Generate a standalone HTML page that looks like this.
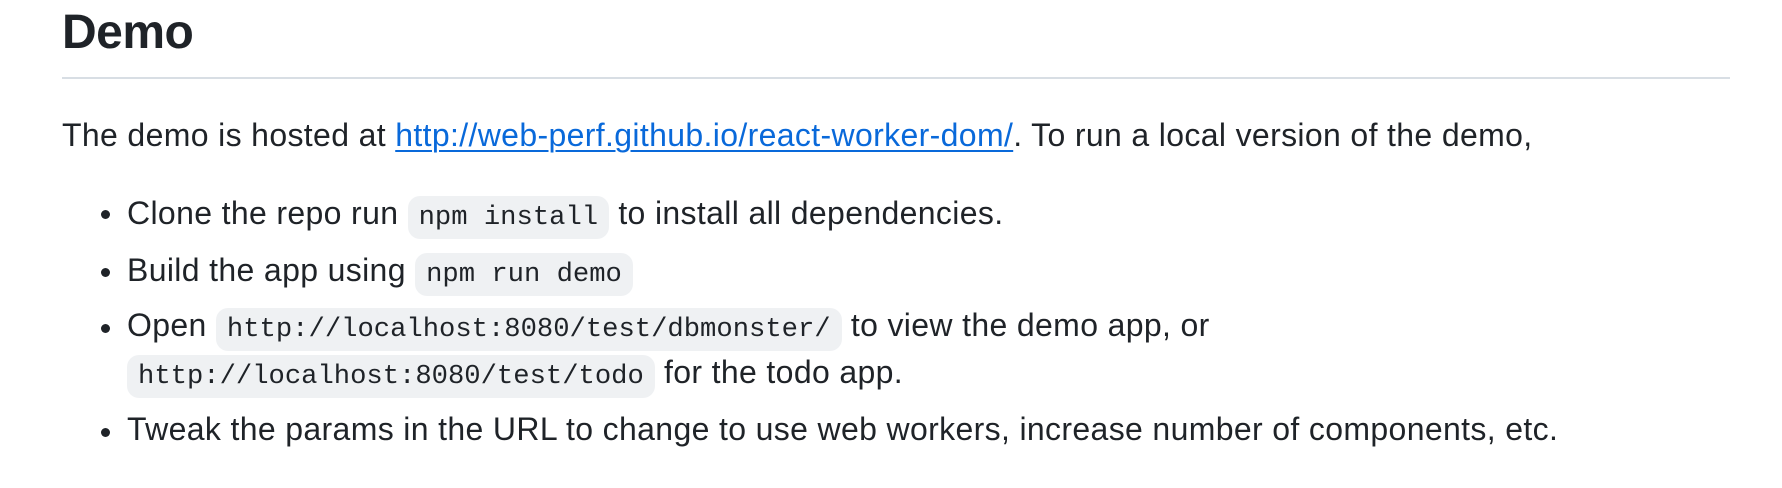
<!DOCTYPE html>
<html><head><meta charset="utf-8"><style>
html,body{margin:0;padding:0;background:#fff;width:1782px;height:488px;overflow:hidden}
body{font-family:"Liberation Sans",Helvetica,Arial,sans-serif;color:#1f2328;position:relative}
.l{position:absolute;white-space:nowrap;font-size:32px;line-height:48px;letter-spacing:0.35px}
h2{position:absolute;left:62px;top:3px;margin:0;font-size:48px;line-height:60px;font-weight:600;letter-spacing:-0.5px}
.rule{position:absolute;left:62px;top:77px;width:1668px;height:2px;background:#d8dee4}
a{color:#0969da;text-decoration:underline;text-decoration-thickness:2px;text-underline-offset:4px}
code{font-family:"Liberation Mono",monospace;font-size:27.2px;letter-spacing:0;background:#eff1f3;border-radius:12px;padding:6px 11px}
.b{position:absolute;width:9px;height:9px;border-radius:50%;background:#1f2328}
</style></head><body>
<h2>Demo</h2>
<div class="rule"></div>
<div class="l" style="left:62px;top:111px">The demo is hosted at <a>http://web-perf.github.io/react-worker-dom/</a>. To run a local version of the demo,</div>

<div class="b" style="left:101px;top:210px"></div>
<div class="l" style="left:127px;top:189px">Clone the repo run <code>npm install</code> to install all dependencies.</div>

<div class="b" style="left:101px;top:268px"></div>
<div class="l" style="left:127px;top:246px">Build the app using <code>npm run demo</code></div>

<div class="b" style="left:101px;top:324px"></div>
<div class="l" style="left:127px;top:301px">Open <code>http://localhost:8080/test/dbmonster/</code> to view the demo app, or</div>
<div class="l" style="left:127px;top:348px"><code>http://localhost:8080/test/todo</code> for the todo app.</div>

<div class="b" style="left:101px;top:428px"></div>
<div class="l" style="left:127px;top:405px">Tweak the params in the URL to change to use web workers, increase number of components, etc.</div>
</body></html>
